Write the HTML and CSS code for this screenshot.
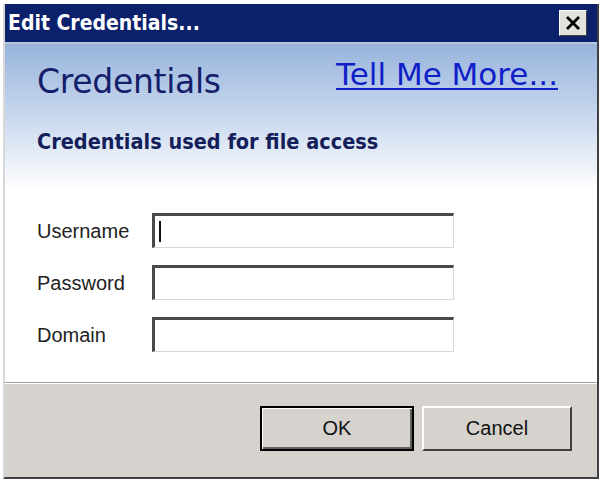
FILE: index.html
```html
<!DOCTYPE html>
<html>
<head>
<meta charset="utf-8">
<link rel="stylesheet" href="styles.css">
</head>
<body>
<div class="window">
  <div class="titlebar">
    <span class="title">Edit Credentials...</span>
    <button class="close" aria-label="Close">
      <svg width="16" height="14" viewBox="0 0 16 14"><path d="M2 1 L14 13 M14 1 L2 13" stroke="#000" stroke-width="2.8" fill="none"/></svg>
    </button>
  </div>
  <div class="content">
    <div class="header">
      <div class="header-row">
        <h1 class="heading">Credentials</h1>
        <a class="more" href="#">Tell Me More...</a>
      </div>
      <p class="subtitle">Credentials used for file access</p>
    </div>
    <div class="form">
      <div class="row"><label class="label">Username</label><div class="field focused"><span class="caret"></span></div></div>
      <div class="row"><label class="label">Password</label><div class="field"></div></div>
      <div class="row"><label class="label">Domain</label><div class="field"></div></div>
    </div>
  </div>
  <div class="footer">
    <button class="btn default">OK</button>
    <button class="btn">Cancel</button>
  </div>
</div>
</body>
</html>
```
FILE: styles.css
```css
html, body {
  margin: 0;
  padding: 0;
  background: #ffffff;
}
body {
  width: 603px;
  height: 484px;
  overflow: hidden;
}
.window {
  margin: 4px 0 0 3px;
  width: 592px;
  height: 473px;
  border-left: 2px solid #d8d8d8;
  border-right: 2px solid #404040;
  border-bottom: 2px solid #404040;
  display: flex;
  flex-direction: column;
  background: #fff;
}
.titlebar {
  height: 38px;
  background: #0c216c;
  display: flex;
  align-items: center;
  justify-content: space-between;
  padding: 0 10px 0 3px;
  border-bottom: 2px solid #b8c6dc;
  flex: none;
}
.title {
  color: #fff;
  font-family: "DejaVu Sans Condensed", "DejaVu Sans", sans-serif;
  font-weight: bold;
  font-size: 21px;
  letter-spacing: 0;
}
.close {
  width: 28px;
  height: 26px;
  padding: 0;
  background: #e4e2dc;
  border: 1px solid;
  border-color: #fff #404040 #404040 #fff;
  display: flex;
  align-items: center;
  justify-content: center;
}
.content {
  flex: 1;
  display: flex;
  flex-direction: column;
  background: #fff;
  border-bottom: 1px solid #a0a0a0;
}
.header {
  background: linear-gradient(to bottom, #98b4dc 0%, #c9d8ee 50%, #ffffff 100%);
  padding: 14px 0 0 32px;
  height: 146px;
  box-sizing: border-box;
}
.header-row {
  display: flex;
  justify-content: space-between;
  align-items: baseline;
  padding-right: 39px;
}
.heading {
  margin: 0;
  font-family: "DejaVu Sans", sans-serif;
  font-weight: normal;
  font-size: 33px;
  color: #141e6a;
  letter-spacing: -0.3px;
  position: relative;
  top: 4px;
}
.more {
  font-family: "DejaVu Sans", sans-serif;
  font-size: 31px;
  color: #1020c8;
  text-decoration: underline;
  text-decoration-thickness: 2px;
  text-underline-offset: 3px;
  position: relative;
  top: -4px;
}
.subtitle {
  margin: 32px 0 0 0;
  font-family: "DejaVu Sans Condensed", "DejaVu Sans", sans-serif;
  font-weight: bold;
  font-size: 21.5px;
  color: #141e5a;
}
.form {
  padding: 23px 0 0 32px;
  display: flex;
  flex-direction: column;
  gap: 17px;
}
.row {
  display: flex;
  align-items: center;
}
.label {
  width: 115px;
  font-family: "Liberation Sans", Arial, sans-serif;
  font-size: 20px;
  color: #222;
  position: relative;
  top: 1px;
}
.field {
  width: 298px;
  height: 31px;
  border-top: 3px solid #4a4a4a;
  border-left: 3px solid #4a4a4a;
  border-right: 1px solid #d8d8d8;
  border-bottom: 1px solid #d8d8d8;
  background: #fff;
  position: relative;
}
.caret {
  position: absolute;
  left: 4px;
  top: 5px;
  width: 2px;
  height: 21px;
  background: #111;
}
.footer {
  height: 94px;
  flex: none;
  background: #d6d3ce;
  border-top: 1px solid #fff;
  display: flex;
  justify-content: flex-end;
  align-items: flex-start;
  padding: 22px 25px 0 0;
  box-sizing: border-box;
  gap: 8px;
}
.btn {
  width: 150px;
  height: 45px;
  background: #d6d3ce;
  font-family: "Liberation Sans", Arial, sans-serif;
  font-size: 20px;
  color: #111;
  border: 2px solid;
  border-color: #fff #404040 #404040 #fff;
  padding: 0;
}
.btn.default {
  width: 154px;
  outline: none;
  border: 2px solid #000;
  box-shadow: inset 1px 1px 0 #fff, inset -2px -2px 0 #606060;
}
```
